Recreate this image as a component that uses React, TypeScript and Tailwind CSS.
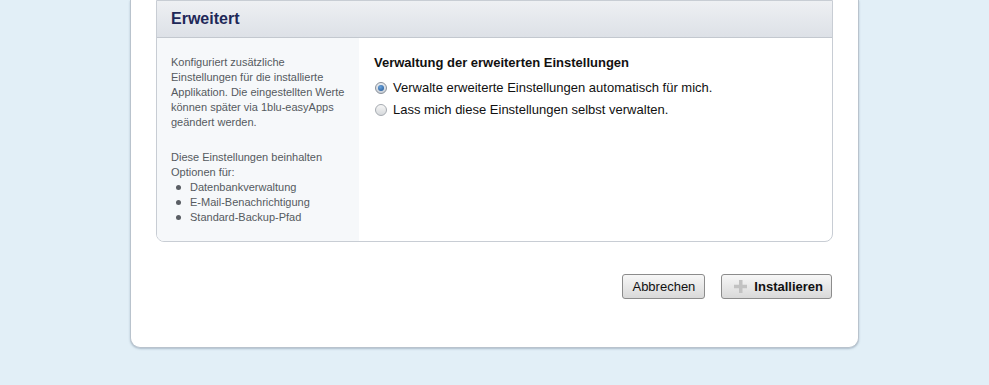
export default function App() {
    return (
        <div className="min-h-screen bg-[#e2eff7] font-['Liberation_Sans',Arial,sans-serif]">
            <div className="mx-auto w-[729px] rounded-b-[10px] border-x border-b border-[#b9c3cd] bg-white px-[25px] pb-[48px] shadow-[0_1px_2px_rgba(120,140,160,0.5)]">
                <div className="overflow-hidden rounded-b-[8px] border border-[#c8cdd4] bg-white">
                    <div className="flex h-[37px] items-center border-b border-[#c3c8cf] bg-gradient-to-b from-[#eef0f3] to-[#dde1e7] px-[14px]">
                        <h2 className="text-[16px] font-bold text-[#1e2858]">Erweitert</h2>
                    </div>
                    <div className="flex">
                        <div className="w-[202px] shrink-0 bg-[#f6f8fa] pb-[16px] pl-[14px] pr-[8px] pt-[17px] text-[11px] leading-[15px] text-[#555a60]">
                            <p>
                                Konfiguriert zusätzliche Einstellungen für die installierte Applikation. Die eingestellten Werte
                                können später via 1blu-easyApps geändert werden.
                            </p>
                            <p className="mt-[20px]">Diese Einstellungen beinhalten Optionen für:</p>
                            <ul>
                                {["Datenbankverwaltung", "E-Mail-Benachrichtigung", "Standard-Backup-Pfad"].map((item) => (
                                    <li key={item} className="flex items-center">
                                        <span className="ml-[5px] mr-[9px] h-[5px] w-[5px] rounded-full bg-[#5a5e64]" />
                                        {item}
                                    </li>
                                ))}
                            </ul>
                        </div>
                        <div className="flex-1 pl-[15px] pt-[17px] text-[13px] text-[#111]">
                            <h3 className="font-bold leading-[16px]">Verwaltung der erweiterten Einstellungen</h3>
                            <label className="mt-[9px] flex h-[16px] items-center">
                                <span className="mr-[6px] ml-[1px] flex h-[12px] w-[12px] items-center justify-center rounded-full border border-[#8a9099] bg-gradient-to-b from-[#e9edf1] to-[#c9d0d8]">
                                    <span className="h-[6px] w-[6px] rounded-full bg-[radial-gradient(circle_at_40%_35%,#6aa3dc,#1f5594)]" />
                                </span>
                                Verwalte erweiterte Einstellungen automatisch für mich.
                            </label>
                            <label className="mt-[6px] flex h-[16px] items-center">
                                <span className="mr-[6px] ml-[1px] h-[12px] w-[12px] rounded-full border border-[#a6abb1] bg-gradient-to-b from-[#f6f6f6] to-[#d6d9dc]" />
                                Lass mich diese Einstellungen selbst verwalten.
                            </label>
                        </div>
                    </div>
                </div>
                <div className="mt-[32px] flex justify-end gap-[16px] pr-[1px]">
                    <button className="h-[25px] rounded-[3px] border border-[#8c8c8c] bg-gradient-to-b from-[#f7f7f7] to-[#d9d9d9] px-[9px] text-[13px] text-[#111]">
                        Abbrechen
                    </button>
                    <button className="flex h-[25px] items-center rounded-[3px] border border-[#8c8c8c] bg-gradient-to-b from-[#f7f7f7] to-[#d9d9d9] pl-[11px] pr-[8px] text-[13px] font-bold text-[#111]">
                        <svg width="15" height="15" viewBox="0 0 15 15" className="mr-[6px]">
                            <rect x="6" y="1" width="3.5" height="13" fill="#c2c2c2" />
                            <rect x="1" y="5.75" width="13" height="3.5" fill="#c2c2c2" />
                        </svg>
                        Installieren
                    </button>
                </div>
            </div>
        </div>
    )
}
